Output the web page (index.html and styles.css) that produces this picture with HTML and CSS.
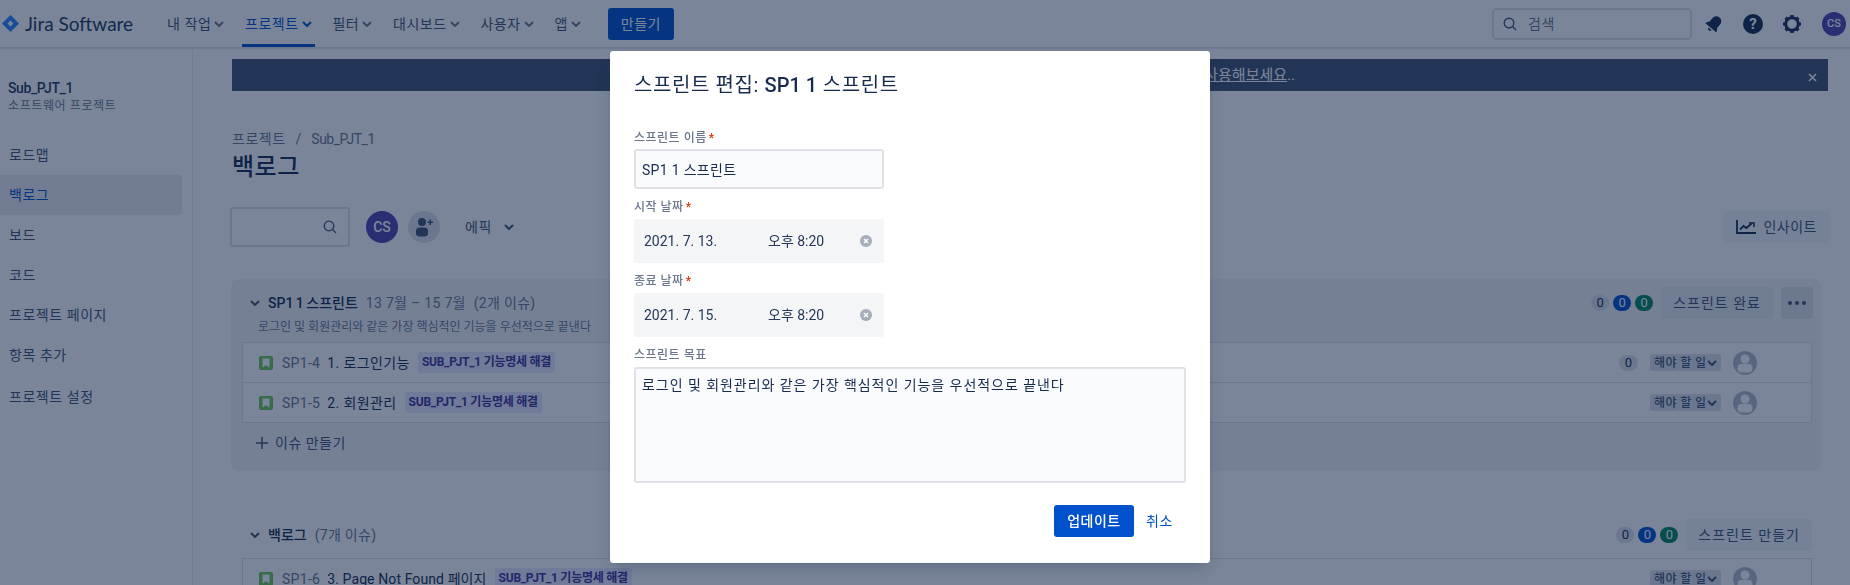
FILE: index.html
```html
<!DOCTYPE html>
<html lang="ko">
<head>
  <meta charset="UTF-8" />
  <meta name="viewport" content="width=device-width, initial-scale=1.0"/>
  <title>백로그 - Jira</title>
  <link rel="stylesheet" href="styles.css">
</head>
<body>
  <header class="topbar">
    <div class="logo">
      <svg width="17" height="17" viewBox="0 0 17 17"><path d="M8.5 0L17 8.5 8.5 17 0 8.5z" fill="#2684FF"/><path d="M8.5 5.6l2.9 2.9-2.9 2.9-2.9-2.9z" fill="#fff"/></svg>
      <span>Jira Software</span>
    </div>
    <nav class="nav">
      <a class="nav-item">내 작업<svg class="chev" viewBox="0 0 10 6"><path d="M1 1l4 4 4-4"/></svg></a>
      <a class="nav-item active">프로젝트<svg class="chev" viewBox="0 0 10 6"><path d="M1 1l4 4 4-4"/></svg></a>
      <a class="nav-item">필터<svg class="chev" viewBox="0 0 10 6"><path d="M1 1l4 4 4-4"/></svg></a>
      <a class="nav-item">대시보드<svg class="chev" viewBox="0 0 10 6"><path d="M1 1l4 4 4-4"/></svg></a>
      <a class="nav-item">사용자<svg class="chev" viewBox="0 0 10 6"><path d="M1 1l4 4 4-4"/></svg></a>
      <a class="nav-item">앱<svg class="chev" viewBox="0 0 10 6"><path d="M1 1l4 4 4-4"/></svg></a>
    </nav>
    <button class="create-btn">만들기</button>
    <div class="top-right">
      <div class="top-search">
        <svg width="14" height="14" viewBox="0 0 14 14" fill="none" stroke="#42526E" stroke-width="1.4"><circle cx="6" cy="6" r="4.8"/><path d="M9.6 9.6L13 13"/></svg>
        <span>검색</span>
      </div>
      <svg class="top-icon" width="20" height="20" viewBox="0 0 20 20" fill="#172B4D"><g transform="rotate(40 10 10)"><path d="M10 1.5c-3.2 0-5 2.4-5 5.4v4L3 14v1h14v-1l-2-3.1V6.900c0-3-1.800-5.400-5-5.400z"/><path d="M8 16.200h4a2 2 0 0 1-4 0z"/></g></svg>
      <svg class="top-icon" width="20" height="20" viewBox="0 0 20 20"><circle cx="10" cy="10" r="10" fill="#172B4D"/><text x="10" y="15" text-anchor="middle" class="help-mark">?</text></svg>
      <svg class="top-icon" width="20" height="20" viewBox="0 0 20 20"><circle cx="10" cy="10" r="6.300" fill="none" stroke="#172B4D" stroke-width="3"/><g stroke="#172B4D" stroke-width="3.200"><path d="M10 1v3M10 16v3M1 10h3M16 10h3M3.600 3.600l2.100 2.100M14.300 14.300l2.100 2.100M3.600 16.400l2.100-2.100M14.300 5.700l2.100-2.100"/></g></svg>
      <span class="avatar small">CS</span>
    </div>
  </header>

  <div class="layout">
    <aside class="sidebar">
      <div class="project">
        <div class="project-name">Sub_PJT_1</div>
        <div class="project-type">소프트웨어 프로젝트</div>
      </div>
      <a class="side-item">로드맵</a>
      <a class="side-item selected">백로그</a>
      <a class="side-item">보드</a>
      <a class="side-item">코드</a>
      <a class="side-item">프로젝트 페이지</a>
      <a class="side-item">항목 추가</a>
      <a class="side-item last">프로젝트 설정</a>
    </aside>

    <main class="content">
      <div class="banner">
        <a class="banner-link">사용해보세요</a><span>..</span>
        <svg class="banner-close" width="9" height="9" viewBox="0 0 9 9" stroke="#fff" stroke-width="1.600"><path d="M1 1l7 7M8 1L1 8"/></svg>
      </div>

      <div class="crumbs"><span class="wide">프로젝트</span><span class="slash">/</span><span class="tight">Sub_PJT_1</span></div>
      <h1 class="title">백로그</h1>

      <div class="toolbar">
        <div class="filter-box">
          <svg width="14" height="14" viewBox="0 0 14 14" fill="none" stroke="#42526E" stroke-width="1.300"><circle cx="6" cy="6" r="4.800"/><path d="M9.600 9.600L13 13"/></svg>
        </div>
        <span class="avatar big">CS</span>
        <span class="add-person">
          <svg width="18" height="20" viewBox="0 0 18 20" fill="#42526E"><circle cx="7" cy="5" r="4"/><rect x="1" y="10.500" width="12" height="9" rx="3.500"/><path d="M12.500 4.500h2v-2h1.500v2h2V6h-2v2h-1.500V6h-2z"/></svg>
        </span>
        <span class="epic">에픽<svg class="chev dark" viewBox="0 0 10 6"><path d="M1 1l4 4 4-4"/></svg></span>
        <button class="btn insight">
          <svg width="20" height="14" viewBox="0 0 20 14" fill="none" stroke="#172B4D" stroke-width="1.800"><path d="M1 0v13h19"/><path d="M4 9.500l3.500-3.500 3 2 5-4.500"/><path d="M13 3h5v4" stroke-width="1.500"/></svg>
          인사이트
        </button>
      </div>

      <section class="sprint">
        <div class="sprint-head">
          <svg class="chev dark" viewBox="0 0 10 6"><path d="M1 1l4 4 4-4"/></svg>
          <strong>SP1 1 스프린트</strong>
          <span class="muted">13 7월 – 15 7월</span>
          <span class="muted">(2개 이슈)</span>
          <div class="head-right">
            <span class="count">0</span><span class="count blue">0</span><span class="count green">0</span>
            <button class="btn">스프린트 완료</button>
            <button class="btn more"><i></i><i></i><i></i></button>
          </div>
        </div>
        <p class="goal">로그인 및 회원관리와 같은 가장 핵심적인 기능을 우선적으로 끝낸다</p>
        <div class="issues">
          <div class="issue">
            <svg class="story" viewBox="0 0 14 14"><rect width="14" height="14" rx="2" fill="#6BC850"/><path d="M3.500 2.500h7v9L7 9.200l-3.500 2.300z" fill="#fff"/></svg>
            <span class="key">SP1-4</span>
            <span class="summary">1. 로그인기능</span>
            <span class="tag">SUB_PJT_1 기능명세 해결</span>
            <span class="count row-count">0</span>
            <span class="status">해야 할 일<svg class="chev dark" viewBox="0 0 10 6"><path d="M1 1l4 4 4-4"/></svg></span>
            <svg class="person" viewBox="0 0 24 24"><circle cx="12" cy="12" r="12" fill="#B3BAC5"/><circle cx="12" cy="8" r="4.500" fill="#fff"/><rect x="4.500" y="13" width="15" height="8.500" rx="4" fill="#fff"/></svg>
          </div>
          <div class="issue">
            <svg class="story" viewBox="0 0 14 14"><rect width="14" height="14" rx="2" fill="#6BC850"/><path d="M3.500 2.500h7v9L7 9.200l-3.500 2.300z" fill="#fff"/></svg>
            <span class="key">SP1-5</span>
            <span class="summary">2. 회원관리</span>
            <span class="tag">SUB_PJT_1 기능명세 해결</span>
            <span class="status first">해야 할 일<svg class="chev dark" viewBox="0 0 10 6"><path d="M1 1l4 4 4-4"/></svg></span>
            <svg class="person" viewBox="0 0 24 24"><circle cx="12" cy="12" r="12" fill="#B3BAC5"/><circle cx="12" cy="8" r="4.500" fill="#fff"/><rect x="4.500" y="13" width="15" height="8.500" rx="4" fill="#fff"/></svg>
          </div>
        </div>
        <div class="add-issue">
          <svg width="12" height="12" viewBox="0 0 12 12" stroke="#42526E" stroke-width="1.500"><path d="M6 0v12M0 6h12"/></svg>
          이슈 만들기
        </div>
      </section>

      <section class="backlog">
        <div class="sprint-head">
          <svg class="chev dark" viewBox="0 0 10 6"><path d="M1 1l4 4 4-4"/></svg>
          <strong>백로그</strong>
          <span class="muted">(7개 이슈)</span>
          <div class="head-right">
            <span class="count">0</span><span class="count blue">0</span><span class="count green">0</span>
            <button class="btn">스프린트 만들기</button>
          </div>
        </div>
        <div class="issues backlog-list">
          <div class="issue">
            <svg class="story" viewBox="0 0 14 14"><rect width="14" height="14" rx="2" fill="#6BC850"/><path d="M3.500 2.500h7v9L7 9.200l-3.500 2.300z" fill="#fff"/></svg>
            <span class="key">SP1-6</span>
            <span class="summary latin">3. Page Not Found 페이지</span>
            <span class="tag">SUB_PJT_1 기능명세 해결</span>
            <span class="status first">해야 할 일<svg class="chev dark" viewBox="0 0 10 6"><path d="M1 1l4 4 4-4"/></svg></span>
            <svg class="person" viewBox="0 0 24 24"><circle cx="12" cy="12" r="12" fill="#B3BAC5"/><circle cx="12" cy="8" r="4.500" fill="#fff"/><rect x="4.500" y="13" width="15" height="8.500" rx="4" fill="#fff"/></svg>
          </div>
        </div>
      </section>
    </main>
  </div>

  <div class="blanket"></div>

  <div class="modal">
    <h2 class="modal-title">스프린트 편집: <b>SP1 1</b> 스프린트</h2>
    <label class="field-label first-label">스프린트 이름<em>*</em></label>
    <input class="text-input" value="SP1 1 스프린트">
    <label class="field-label">시작 날짜<em>*</em></label>
    <div class="date-box">
      <span class="date">2021. 7. 13.</span>
      <span class="time">오후 8:20</span>
      <svg class="clear" width="12" height="12" viewBox="0 0 12 12"><circle cx="6" cy="6" r="6" fill="#A5ADBA"/><path d="M4 4l4 4M8 4l-4 4" stroke="#fff" stroke-width="1.500"/></svg>
    </div>
    <label class="field-label">종료 날짜<em>*</em></label>
    <div class="date-box">
      <span class="date">2021. 7. 15.</span>
      <span class="time">오후 8:20</span>
      <svg class="clear" width="12" height="12" viewBox="0 0 12 12"><circle cx="6" cy="6" r="6" fill="#A5ADBA"/><path d="M4 4l4 4M8 4l-4 4" stroke="#fff" stroke-width="1.500"/></svg>
    </div>
    <label class="field-label goal-label">스프린트 목표</label>
    <textarea class="goal-input">로그인 및 회원관리와 같은 가장 핵심적인 기능을 우선적으로 끝낸다</textarea>
    <div class="modal-foot">
      <button class="update-btn">업데이트</button>
      <a class="cancel">취소</a>
    </div>
  </div>
</body>
</html>
```

FILE: styles.css
```css
* { box-sizing: border-box; }
html, body { height: 100%; }
body { margin: 0; overflow: hidden; background: #fff; color: #172B4D; font-family: Roboto, "Noto Sans CJK KR", sans-serif; font-size: 14px; line-height: 20px; }
button { font: inherit; border: none; cursor: pointer; }
a { cursor: pointer; }
svg { flex: none; display: block; }

.chev { width: 10px; height: 6px; fill: none; stroke: #6B778C; stroke-width: 2; }
.chev.dark { stroke: #42526E; }

.topbar { display: flex; align-items: center; height: 48px; padding-left: 2px; border-bottom: 1px solid #DFE1E6; box-shadow: 0 1px 1px rgba(9,30,66,.1); }
.logo { display: flex; align-items: center; gap: 6px; width: 162px; color: #253858; }
.logo span { font-family: Lato, sans-serif; font-size: 19px; font-weight: 400; white-space: nowrap; }
.nav { display: flex; gap: 14.7px; height: 47px; }
.nav-item { display: flex; align-items: center; gap: 3px; padding: 3px 3px 0; color: #42526E; border-bottom: 3px solid transparent; white-space: nowrap; letter-spacing: .55px; }
.nav-item.active { color: #0052CC; border-bottom-color: #0052CC; }
.nav-item.active .chev { stroke: #0052CC; }
.create-btn { height: 32px; width: 66px; margin-left: 24px; background: #0052CC; color: #fff; border-radius: 3px; letter-spacing: .5px; }
.top-right { display: flex; align-items: center; margin-left: auto; }
.top-search { display: flex; align-items: center; gap: 11px; width: 200px; height: 32px; padding-left: 9px; border: 2px solid #DFE1E6; border-radius: 5px; color: #6B778C; letter-spacing: .5px; }
.top-icon { margin-left: 19px; }
.top-search + .top-icon { margin-left: 12px; }
.help-mark { font-size: 15px; font-weight: 700; fill: #fff; }
.avatar { display: flex; align-items: center; justify-content: center; flex: none; border-radius: 50%; background: #5243AA; color: #fff; font-weight: 500; }
.avatar.small { width: 24px; height: 24px; margin: 0 4px 0 20px; font-size: 11px; }
.avatar.big { width: 32px; height: 32px; margin-left: 16px; font-size: 14px; }

.layout { display: flex; height: 537px; }
.sidebar { flex: none; width: 193px; padding-top: 30px; border-right: 1px solid #EBECF0; }
.project { padding-left: 8px; height: 57px; }
.project-name { font-weight: 500; color: #253858; letter-spacing: -.4px; }
.project-type { font-size: 12px; line-height: 16px; color: #6B778C; letter-spacing: .6px; }
.side-item { display: flex; align-items: center; width: 182px; height: 40px; padding-left: 9px; color: #42526E; border-radius: 0 3px 3px 0; letter-spacing: .55px; }
.side-item.selected { background: #EBECF0; color: #0052CC; }
.side-item.last { margin-top: 2px; }

.content { flex: 1; min-width: 0; padding: 11px 22px 0 39px; }
.banner { display: flex; align-items: center; justify-content: flex-end; height: 32px; padding-right: 533px; position: relative; background: #42526E; color: #fff; font-size: 15px; }
.banner-link { text-decoration: underline; }
.banner-close { position: absolute; right: 11px; top: 14px; }
.crumbs { display: flex; gap: 10px; margin-top: 38px; color: #6B778C; }
.crumbs .wide { letter-spacing: .5px; }
.crumbs .tight { letter-spacing: -.5px; }
.title { margin: 2px 0 0; font-size: 24px; line-height: 32px; font-weight: 500; color: #172B4D; letter-spacing: .5px; }
.toolbar { display: flex; align-items: center; height: 40px; margin-top: 24px; }
.filter-box { display: flex; align-items: center; justify-content: flex-end; width: 120px; height: 40px; margin-left: -2px; padding-right: 11px; border: 2px solid #DFE1E6; border-radius: 3px; }
.add-person { display: flex; align-items: center; justify-content: center; width: 32px; height: 32px; margin-left: 10px; border-radius: 50%; background: #DFE1E6; }
.epic { display: flex; align-items: center; gap: 12px; margin-left: 25px; color: #42526E; letter-spacing: .5px; }
.btn { height: 32px; padding: 0 12px; background: rgba(9,30,66,.04); color: #42526E; border-radius: 3px; white-space: nowrap; letter-spacing: 1px; }
.insight { display: flex; align-items: center; gap: 7px; margin-left: auto; margin-right: -2px; padding: 0 13px; letter-spacing: .5px; }

.sprint { height: 192px; margin: 32px 7px 0 -1px; padding: 8px 9px 0 11px; background: #F4F5F7; border-radius: 8px; }
.backlog { margin: 48px 7px 0 -1px; padding: 0 9px 0 11px; }
.sprint-head { display: flex; align-items: center; gap: 8px; height: 32px; padding-left: 8px; }
.sprint-head strong { font-weight: 500; word-spacing: -1px; }
.muted { color: #6B778C; letter-spacing: .3px; }
.head-right { display: flex; align-items: center; gap: 4px; margin-left: auto; }
.head-right .btn { margin-left: 4px; }
.more { display: flex; align-items: center; justify-content: center; gap: 3px; width: 32px; padding: 0; margin-right: -1px; background: rgba(9,30,66,.08); }
.more i { width: 4px; height: 4px; border-radius: 50%; background: #42526E; }
.count { display: inline-flex; align-items: center; justify-content: center; width: 18px; height: 16px; border-radius: 8px; background: #DFE1E6; font-size: 13px; line-height: 16px; color: #172B4D; }
.count.blue { background: #0052CC; color: #fff; }
.count.green { background: #00875A; color: #fff; }
.goal { margin: 0; padding-left: 16px; height: 23px; font-size: 12px; line-height: 16px; color: #6B778C; }
.issues { background: #fff; border: 1px solid #DFE1E6; border-top: none; }
.backlog-list { margin-top: 7px; }
.issue { display: flex; align-items: center; height: 40px; padding-right: 54px; border-top: 1px solid #DFE1E6; padding-left: 16px; }
.story { width: 14px; height: 14px; }
.key { margin-left: 9px; color: #6B778C; letter-spacing: .3px; }
.summary { margin-left: 7px; white-space: nowrap; letter-spacing: .4px; }
.summary.latin { letter-spacing: .1px; }
.tag { margin-left: 8px; padding: 0 4px; height: 21px; background: #EAE6FF; color: #403294; font-size: 12px; line-height: 21px; font-weight: 700; border-radius: 3px; white-space: nowrap; letter-spacing: -.25px; }
.row-count { margin-left: auto; width: 19px; }
.status { display: flex; align-items: center; width: 71px; height: 17px; margin-left: 12px; padding: 0 4px; background: #DFE1E6; color: #42526E; font-size: 12px; font-weight: 500; border-radius: 3px; white-space: nowrap; letter-spacing: .4px; }
.status .chev { margin-left: auto; }
.status.first { margin-left: auto; }
.person { width: 24px; height: 24px; margin-left: 12px; }
.add-issue { display: flex; align-items: center; gap: 7px; height: 30px; margin-top: 5px; padding-left: 14px; color: #42526E; letter-spacing: .5px; }

.blanket { position: fixed; inset: 0; background: rgba(9,30,66,.54); }
.modal { position: fixed; top: 51px; left: 610px; width: 600px; height: 512px; padding: 20px 24px 0; background: #fff; border-radius: 3px; box-shadow: 0 8px 16px -4px rgba(9,30,66,.25), 0 0 1px rgba(9,30,66,.31); }
.modal-title { margin: 0; font-size: 20px; line-height: 28px; font-weight: 400; color: #172B4D; letter-spacing: .6px; }
.modal-title b { font-weight: 500; letter-spacing: 0; }
.field-label { display: block; margin-top: 10px; margin-bottom: 4px; font-size: 12px; line-height: 16px; font-weight: 500; color: #6B778C; letter-spacing: .5px; }
.field-label em { color: #DE350B; font-style: normal; margin-left: 2px; }
.first-label { margin-top: 31px; margin-bottom: 3px; }
.goal-label { margin-top: 10px; margin-bottom: 4px; }
.text-input { display: block; width: 250px; height: 40px; padding: 0 6px; background: #FAFBFC; border: 2px solid #DFE1E6; border-radius: 3px; font: inherit; color: #172B4D; outline: none; letter-spacing: .3px; }
.date-box { display: flex; align-items: center; width: 250px; height: 44px; padding-left: 10px; background: #F4F5F7; border-radius: 3px; color: #253858; }
.date { width: 124px; }
.time { width: 92px; }
.goal-input { display: block; width: 552px; height: 116px; padding: 6px; background: #FAFBFC; border: 2px solid #DFE1E6; border-radius: 3px; font: inherit; color: #172B4D; resize: none; outline: none; letter-spacing: .95px; }
.modal-foot { display: flex; align-items: center; margin-top: 22px; padding-left: 420px; }
.update-btn { width: 80px; height: 32px; background: #0052CC; color: #fff; font-weight: 500; border-radius: 3px; letter-spacing: .5px; }
.cancel { padding: 0 12px; color: #0052CC; letter-spacing: .5px; }
```
